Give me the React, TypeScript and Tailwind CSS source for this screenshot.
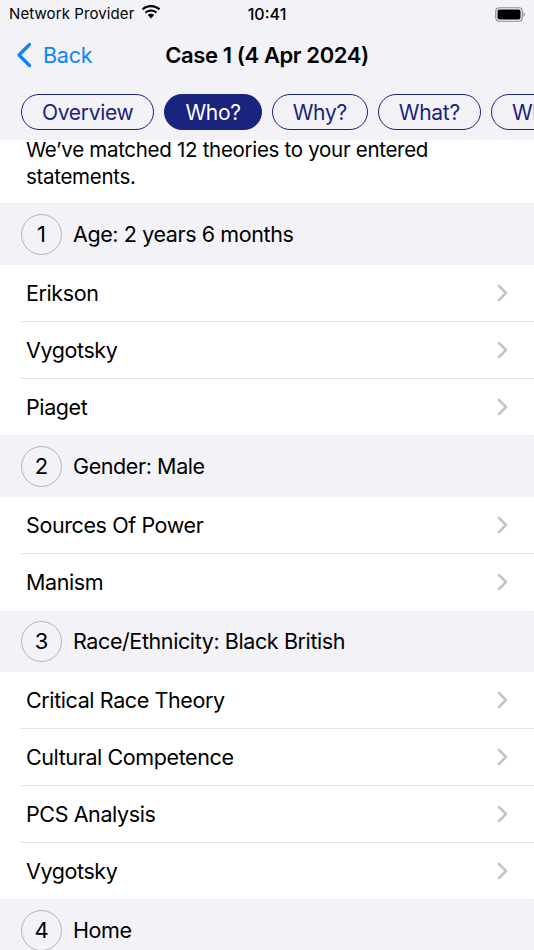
const tabs = ['Overview', 'Who?', 'Why?', 'What?', 'When?'];

const sections = [
  { n: 1, title: 'Age: 2 years 6 months', rows: ['Erikson', 'Vygotsky', 'Piaget'] },
  { n: 2, title: 'Gender: Male', rows: ['Sources Of Power', 'Manism'] },
  { n: 3, title: 'Race/Ethnicity: Black British', rows: ['Critical Race Theory', 'Cultural Competence', 'PCS Analysis', 'Vygotsky'] },
  { n: 4, title: 'Home', rows: [] as string[] },
];

function StatusBar() {
  return (
    <div className="flex h-[28px] items-center justify-between px-[9px] text-[15px] text-black">
      <div className="flex w-[180px] items-center gap-[7px]">
        <span className="tracking-[0.1px]">Network Provider</span>
        <svg width="20" height="15" viewBox="0 0 20 15" className="-mt-[3px]">
          <path d="M10 2.2c3 0 5.7 1.1 7.800 3l1.400-1.600C16.700 1.300 13.500 0 10 0S3.300 1.300.8 3.600l1.400 1.600c2.100-1.900 4.800-3 7.800-3z" fill="#000" />
          <path d="M10 6.600c1.800 0 3.400.7 4.700 1.800l1.500-1.600C14.500 5.300 12.400 4.400 10 4.400s-4.500.9-6.200 2.400l1.500 1.600C6.600 7.300 8.200 6.600 10 6.600z" fill="#000" />
          <path d="M10 8.800c-1.300 0-2.400.5-3.200 1.200L10 13.500l3.200-3.500c-.8-.7-1.900-1.200-3.200-1.200z" fill="#000" />
        </svg>
      </div>
      <span className="text-[16px] font-medium">10:41</span>
      <div className="flex w-[180px] justify-end">
        <svg width="30" height="15" viewBox="0 0 30 15">
          <rect x="0.75" y="0.75" width="26.500" height="13.500" rx="3.500" fill="none" stroke="#8e8e93" strokeWidth="1.200" />
          <rect x="2.500" y="2.500" width="23" height="10" rx="2" fill="#000" />
          <path d="M28.500 5.200c.8.300 1.300 1.200 1.300 2.300s-.5 2-1.300 2.300z" fill="#8e8e93" />
        </svg>
      </div>
    </div>
  );
}

function NavBar() {
  return (
    <div className="relative flex h-[53px] items-center justify-center pt-[2px]">
      <div className="absolute left-[16px] top-[13px] flex items-center gap-[11px] text-[#0a84ff]">
        <svg width="16" height="26" viewBox="0 0 16 26">
          <path d="M13.500 2.500 3 13l10.500 10.500" fill="none" stroke="#0a84ff" strokeWidth="3.200" strokeLinecap="round" strokeLinejoin="round" />
        </svg>
        <span className="text-[21.500px] leading-[28px] tracking-[-0.2px]">Back</span>
      </div>
      <span className="text-[22px] font-semibold tracking-[-0.4px] text-black">Case 1 (4 Apr 2024)</span>
    </div>
  );
}

function Tabs() {
  return (
    <div className="flex h-[59px] gap-[10px] overflow-hidden pl-[21px] pt-[13px]">
      {tabs.map((t) => (
        <div
          key={t}
          className={`flex h-[36px] shrink-0 items-center rounded-full border-[1.5px] border-[#1a237e] px-[20px] pt-px text-[21px] tracking-[-0.3px] ${
            t === 'Who?' ? 'bg-[#1a237e] text-white' : 'text-[#1a237e]'
          }`}
        >
          {t}
        </div>
      ))}
    </div>
  );
}

export default function App() {
  return (
    <div className="h-[950px] w-[534px] overflow-hidden bg-[#f2f2f7] font-['Inter',sans-serif] text-black">
      <StatusBar />
      <NavBar />
      <Tabs />

      <div className="flow-root h-[63.25px] bg-white px-[26px] text-[20.500px] leading-[27px] tracking-[-0.3px]">
        <p className="-mt-[4px]">We’ve matched 12 theories to your entered statements.</p>
      </div>

      {sections.map((s) => (
        <div key={s.n}>
          <div className="flex h-[61.75px] items-center gap-[11px] bg-[#f2f2f7] pl-[21px]">
            <div className="flex h-[41px] w-[41px] items-center justify-center rounded-full border-[1.5px] border-[#b4b4b8] pt-px text-[22px]">
              {s.n}
            </div>
            <span className="text-[21.500px] tracking-[-0.4px]">{s.title}</span>
          </div>
          <div className="bg-white">
            {s.rows.map((r, i) => (
              <div key={r} className="pl-[21px]">
                <div
                  className={`flex h-[56.75px] items-center justify-between pl-[5px] pr-[26px] ${
                    i < s.rows.length - 1 ? 'border-b border-[#e2e2e4]' : ''
                  }`}
                >
                  <span className="text-[21.500px] tracking-[-0.4px]">{r}</span>
                  <svg width="11" height="18" viewBox="0 0 11 18">
                    <path d="M2 2l7 7-7 7" fill="none" stroke="#c4c4c6" strokeWidth="2.500" strokeLinecap="round" strokeLinejoin="round" />
                  </svg>
                </div>
              </div>
            ))}
          </div>
        </div>
      ))}
    </div>
  );
}
